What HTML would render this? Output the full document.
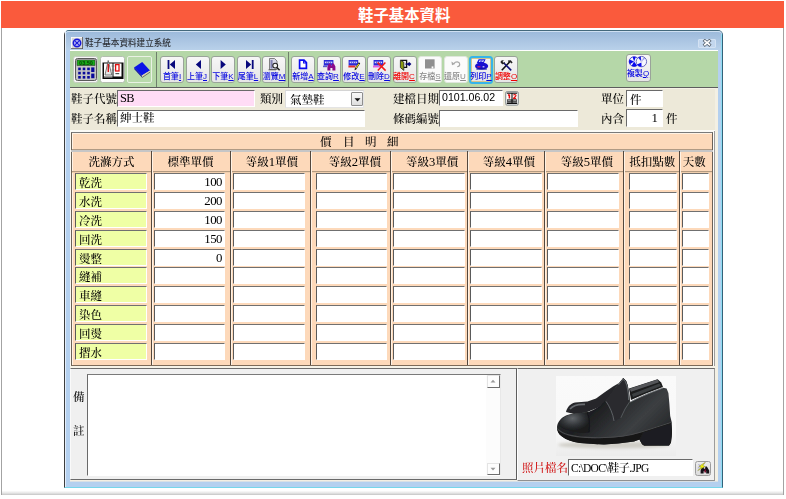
<!DOCTYPE html>
<html lang="zh-Hant"><head><meta charset="utf-8"><title>鞋子基本資料</title>
<style>
html,body{margin:0;padding:0}
body{width:786px;height:499px;position:relative;overflow:hidden;background:#fff;font-family:"Liberation Serif","Noto Serif CJK SC",serif;font-size:11.5px;font-weight:500;color:#000;line-height:1}
div,span{box-sizing:border-box}
.a{position:absolute}
.lab,.inp,.cell,.hd,.ttl,.t{will-change:transform}
.hdr{left:1px;top:1px;width:783px;height:27px;background:#fa5a3c}
.hdr span{position:absolute;left:357px;top:7px;font:bold 15.4px/15px "Liberation Sans","Noto Sans CJK TC",sans-serif;color:#fff;white-space:nowrap}
.win{left:64px;top:30px;width:659px;height:458px;background:#b4d0ef;border-radius:5px 5px 0 0;border:1px solid #33627a;border-top-color:#44697c;border-left-color:#3d3d3d;border-bottom-color:#76d6ea}
.tbar{left:65px;top:31px;width:657px;height:19px;border-radius:4px 4px 0 0;background:linear-gradient(#9dbadb,#b9d1ea);border-top:1px solid #cfe0f2}
.ttl{left:85px;top:38px;font-family:"Liberation Sans","Noto Sans CJK TC",sans-serif;font-size:8.6px;font-weight:500;line-height:10px;color:#30343a;white-space:nowrap}
.lab{white-space:nowrap;font-size:11.5px;line-height:12px;height:12px}
.inp{background:#fff;border:1px solid #6a6a6a;border-right-color:#fff;border-bottom-color:#fff;white-space:nowrap;overflow:hidden;font-size:11.5px;line-height:14px;padding-left:2px}
.cell{background:#fff;border-top:1px solid #707070;border-left:1px solid #5a5a5a;border-right:1px solid #fff;border-bottom:1px solid #fff;height:17px;white-space:nowrap;overflow:hidden;font-size:11.5px;line-height:18px}
.cell.y{background:#efffa5;padding-left:3px}
.cell.n{text-align:right;padding-right:2px;font-size:12.8px;letter-spacing:-0.5px;line-height:17px}
.btn{top:56px;width:24px;height:27px;border:1px solid #9aa39a;border-radius:3px;background:linear-gradient(#f7f7f7,#e6e6e6)}
.btn.dis{border-color:#dfe6dc;background:#fbfbfb}
.btn .t{position:absolute;left:-6.5px;width:34px;top:15px;text-align:center;font-family:"Liberation Sans","Noto Sans CJK TC",sans-serif;font-size:8px;font-weight:500;line-height:9px;color:#0404e0;white-space:nowrap}
.btn.red .t{color:#f00000}
.btn.dis .t{color:#8a8a8a}
.btn svg{position:absolute;left:0;top:0}
.vsep{top:52px;width:1px;height:35px;background:#6f7f6c}
.hd{white-space:nowrap;font-size:11.5px;line-height:12px;text-align:center}
</style></head>
<body>
<div class="a hdr"><span>鞋子基本資料</span></div>
<div class="a" style="left:1px;top:28px;width:1px;height:467px;background:#a3a3a3;"></div>
<div class="a" style="left:783px;top:28px;width:1px;height:467px;background:#a3a3a3;"></div>
<div class="a" style="left:2px;top:491px;width:781px;height:4px;background:linear-gradient(#fbfbfb,#eeeeee,#dcdcdc,#c4c4c4);"></div>
<div class="a win"></div>
<div class="a tbar"></div>
<div class="a" style="left:65px;top:31px;width:1px;height:456px;background:#e4eefa;"></div>
<div class="a" style="left:721px;top:34px;width:1px;height:453px;background:#8fdcf2;"></div>
<svg class="a" style="left:71px;top:37px" width="12" height="12" viewBox="0 0 12 12"><rect x="0" y="0" width="12" height="12" fill="#d8d8d8"/><path d="M0 12V0H12" fill="none" stroke="#fff" stroke-width="1.6"/><path d="M12 0V12H0" fill="none" stroke="#555" stroke-width="1.6"/><circle cx="6" cy="6" r="3.6" fill="#e8e8ff" stroke="#1a1ad8" stroke-width="1.7"/><path d="M4.2 4.2L7.8 7.8M7.8 4.2L4.2 7.8" stroke="#1a1ad8" stroke-width="1.3"/></svg>
<div class="a ttl">鞋子基本資料建立系統</div>
<div class="a" style="left:698px;top:39px;width:18px;height:9px;background:#c3d7ee;border:1px solid #d3e2f3;border-radius:1px"></div>
<svg class="a" style="left:702px;top:39px" width="10" height="8" viewBox="0 0 10 8"><path d="M2.9 1.9L7.3 5.7M7.3 1.9L2.9 5.7" stroke="#566270" stroke-width="3.2" stroke-linecap="square"/><path d="M2.9 1.9L7.3 5.7M7.3 1.9L2.9 5.7" stroke="#fff" stroke-width="1.7" stroke-linecap="square"/></svg>
<div class="a" style="left:70px;top:50px;width:648px;height:1px;background:#fff;"></div>
<div class="a" style="left:70px;top:51px;width:648px;height:36px;background:#b5d7a8;"></div>
<div class="a" style="left:70px;top:87px;width:648px;height:1px;background:#5d5d5d;"></div>
<div class="a" style="left:70px;top:88px;width:647px;height:393px;background:#ede9d9;"></div>
<div class="a" style="left:70px;top:88px;width:647px;height:1px;background:#f5f2e6;"></div>
<div class="a btn" style="left:73px;width:25px;border-color:#c4ccc0;border-radius:2.5px;background:#f6f6f6"></div>
<div class="a btn" style="left:100px;width:25px;border-color:#b4beb0;border-radius:2.5px;background:#fdfdfd"></div>
<div class="a btn" style="left:127px;width:25px;border-color:#e9f2e4;border-radius:2px;background:#b9daac"></div>
<svg class="a" style="left:75px;top:58px" width="22" height="23" viewBox="0 0 22 23"><rect x="0.5" y="0.5" width="21" height="22" rx="2" fill="#c4c4c4" stroke="#5a5a5a"/><rect x="2" y="2" width="18" height="5.5" fill="#18b018" stroke="#333" stroke-width="0.6"/><text x="11" y="6.8" font-size="5.5" font-weight="bold" text-anchor="middle" fill="#064006" font-family="Liberation Sans,sans-serif">03.50</text><rect x="3.2" y="9.6" width="2.6" height="2.6" fill="#0a0a9a"/><rect x="7.7" y="9.6" width="2.6" height="2.6" fill="#0a0a9a"/><rect x="12.2" y="9.6" width="2.6" height="2.6" fill="#0a0a9a"/><rect x="3.2" y="13.8" width="2.6" height="2.6" fill="#0a0a9a"/><rect x="7.7" y="13.8" width="2.6" height="2.6" fill="#0a0a9a"/><rect x="12.2" y="13.8" width="2.6" height="2.6" fill="#0a0a9a"/><rect x="3.2" y="18" width="2.6" height="2.6" fill="#0a0a9a"/><rect x="7.7" y="18" width="2.6" height="2.6" fill="#0a0a9a"/><rect x="12.2" y="18" width="2.6" height="2.6" fill="#0a0a9a"/><rect x="16.2" y="9.4" width="3.2" height="4.6" fill="#0a0a9a"/><rect x="16.2" y="15.6" width="3.2" height="4.6" fill="#0a0a9a"/></svg>
<svg class="a" style="left:102px;top:58px" width="22" height="23" viewBox="0 0 22 23"><path d="M0.5 4.5H21.5V21H0.5Z" fill="#0a0a0a"/><path d="M2 5.5H10.5V18.5H2Z" fill="#fff"/><path d="M11.5 5.5H19.5V18.5H11.5Z" fill="#fff"/><path d="M2 18.5L10.5 18.5L10.5 19.5L2 19.5Z" fill="#bbb"/><path d="M3 17L6.2 2.5L9.8 17Z" fill="#e8e8e8" stroke="#444" stroke-width="0.7"/><path d="M6.3 6V14" stroke="#d01818" stroke-width="1.4"/><rect x="13.6" y="6.6" width="3.4" height="6.4" fill="none" stroke="#e01010" stroke-width="1.3"/><rect x="13.4" y="15" width="3.8" height="1.2" fill="#555"/><path d="M9.6 8H12.4M9.6 12H12.4" stroke="#666" stroke-width="0.8"/></svg>
<svg class="a" style="left:129px;top:58px" width="22" height="23" viewBox="0 0 22 23"><path d="M5 9.6L13.2 4L21 12.4L12.8 17.6Z" fill="#0a14e6"/><path d="M5 9.6L5.6 11.6L13 19.6L12.8 17.6Z" fill="#0a0aa0"/><path d="M12.8 17.6L21 12.4L21 14.2L13 19.6Z" fill="#d9d2b4"/><path d="M13 19.6L21 14.2" stroke="#333" stroke-width="0.6"/></svg>
<div class="a vsep" style="left:156px"></div>
<div class="a vsep" style="left:288px"></div>
<div class="a btn " style="left:160.4px;width:24px"><svg width="22" height="16" viewBox="0 0 22 16"><rect x="6.6" y="3" width="1.8" height="9" fill="#08087c"/><path d="M14 3V12L8.8 7.5Z" fill="#08087c"/></svg><span class="t">首筆<u>I</u></span></div>
<div class="a btn " style="left:185.8px;width:24px"><svg width="22" height="16" viewBox="0 0 22 16"><path d="M14 3V12L8.8 7.5Z" fill="#08087c"/></svg><span class="t">上筆<u>J</u></span></div>
<div class="a btn " style="left:211.2px;width:24px"><svg width="22" height="16" viewBox="0 0 22 16"><path d="M8.6 3V12L13.8 7.5Z" fill="#08087c"/></svg><span class="t">下筆<u>K</u></span></div>
<div class="a btn " style="left:236.6px;width:24px"><svg width="22" height="16" viewBox="0 0 22 16"><path d="M8 3V12L13.2 7.5Z" fill="#08087c"/><rect x="13.8" y="3" width="1.8" height="9" fill="#08087c"/></svg><span class="t">尾筆<u>L</u></span></div>
<div class="a btn " style="left:262px;width:24px"><svg width="22" height="16" viewBox="0 0 22 16"><path d="M6.5 1.5H11.5L14 4V12.5H6.5Z" fill="#d6d6e6" stroke="#666" stroke-width="0.8"/><path d="M7.5 3H9.6V11.5H7.5Z" fill="#8080b0"/><circle cx="12.2" cy="8.6" r="2.4" fill="#f4f4f4" stroke="#222" stroke-width="1.1"/><path d="M14 10.6L16.6 13.2" stroke="#222" stroke-width="1.5"/><path d="M5.5 12.8H13" stroke="#444" stroke-width="0.8"/></svg><span class="t">瀏覽<u>M</u></span></div>
<div class="a btn " style="left:291.2px;width:24px"><svg width="22" height="16" viewBox="0 0 22 16"><path d="M7.6 3.2H12L14.4 5.6V11.4H7.6Z" fill="#fff" stroke="#0a0af0" stroke-width="1.7"/><path d="M11.6 3.2V6H14.4" fill="none" stroke="#0a0af0" stroke-width="1.1"/></svg><span class="t">新增<u>A</u></span></div>
<div class="a btn " style="left:316.6px;width:24px"><svg width="22" height="16" viewBox="0 0 22 16"><rect x="5.8" y="3" width="9.6" height="5.6" fill="#2a2ad8"/><rect x="6.9" y="4.6" width="7.4" height="1.6" fill="#d8d8f4"/><path d="M8.8 4.6V6.2M10.7 4.6V6.2M12.6 4.6V6.2" stroke="#2a2ad8" stroke-width="0.7"/><rect x="5" y="8.6" width="4" height="1.6" fill="#5a5ad0"/><path d="M9.4 13.4V9.6L11 6.6H12.6L13 8.6H13.8L14.2 6.6H15.8L17.4 9.6V13.4H14.4V11H12.4V13.4Z" fill="#8a0a8a"/></svg><span class="t">查詢<u>R</u></span></div>
<div class="a btn " style="left:342px;width:24px"><svg width="22" height="16" viewBox="0 0 22 16"><rect x="5.6" y="3" width="9.6" height="5.6" fill="#2a2ad8"/><rect x="6.7" y="4.6" width="7.4" height="1.6" fill="#d8d8f4"/><path d="M8.6 4.6V6.2M10.5 4.6V6.2M12.4 4.6V6.2" stroke="#2a2ad8" stroke-width="0.7"/><rect x="5.4" y="8.6" width="7" height="1.9" fill="#e03030"/><path d="M15.8 5.2L17.2 6.2L13.2 12.4L11.6 13.2L11.8 11.4Z" fill="#111"/><path d="M15.4 6.6L16.2 7.2L13.2 11.6L12.4 11Z" fill="#f4e020"/></svg><span class="t">修改<u>E</u></span></div>
<div class="a btn " style="left:367.4px;width:24px"><svg width="22" height="16" viewBox="0 0 22 16"><rect x="5.6" y="3" width="9.6" height="5.6" fill="#2a2ad8"/><rect x="6.7" y="4.6" width="7.4" height="1.6" fill="#d8d8f4"/><path d="M8.6 4.6V6.2M10.5 4.6V6.2M12.4 4.6V6.2" stroke="#2a2ad8" stroke-width="0.7"/><rect x="5" y="8.6" width="7.6" height="1.9" fill="#e060e0"/><path d="M9.6 5.6L17.6 13.6M17.4 5.4L9.8 13.4" stroke="#f01818" stroke-width="1.5"/></svg><span class="t">刪除<u>D</u></span></div>
<div class="a btn red" style="left:392.8px;width:24px"><svg width="22" height="16" viewBox="0 0 22 16"><path d="M6.6 3.4H12.6V10.4H9.8" fill="none" stroke="#111" stroke-width="1.3"/><path d="M6.4 3.2L9.8 5.2V13.4L6.4 10.6Z" fill="#8a9a10" stroke="#222" stroke-width="0.8"/><path d="M13 7.1L15.2 4.9L17.4 7.1L15.2 9.3Z" fill="#08087c"/><path d="M11.4 7.1H14" stroke="#08087c" stroke-width="1.2"/></svg><span class="t">離開<u>C</u></span></div>
<div class="a btn dis" style="left:418.2px;width:24px"><svg width="22" height="16" viewBox="0 0 22 16"><rect x="6" y="2.3" width="9.6" height="9.2" fill="#8f8f8f"/><rect x="12.6" y="9.4" width="1.8" height="2.1" fill="#fbfbfb"/></svg><span class="t">存檔<u>S</u></span></div>
<div class="a btn dis" style="left:443.6px;width:24px"><svg width="22" height="16" viewBox="0 0 22 16"><path d="M9 6.6C10.4 4.2 14.4 4.3 14.7 7C14.8 8.6 13.6 9.7 12.2 9.8" fill="none" stroke="#a6a6a6" stroke-width="1.15"/><path d="M6.4 4.6L7 8.3L10.1 6.9Z" fill="#a6a6a6"/></svg><span class="t">還原<u>U</u></span></div>
<div class="a" style="left:468.6px;top:55.5px;width:24.6px;height:28.6px;border:2px solid #36b4ea;border-radius:3.5px;background:#d6c38c"><div class="a" style="left:1px;top:1px;right:1px;bottom:1px;background:linear-gradient(#f6f6f6,#e6e6e6)"></div><div class="a btn" style="left:-1.6px;top:-1.5px;width:24px;height:27px;border-color:transparent;background:none"><svg width="22" height="16" viewBox="0 0 22 16"><path d="M8.6 2.2H15.6L13.8 6H6.8Z" fill="#1414d8"/><path d="M9.6 3.2H14L13.2 5H8.8Z" fill="#e8e8ff"/><path d="M10.4 3.6H12.6M10 4.6H12.2" stroke="#1414d8" stroke-width="0.6"/><ellipse cx="11.6" cy="9" rx="6.6" ry="3.6" fill="#1a10d0"/><path d="M7.4 9.8H10.4" stroke="#e02060" stroke-width="1.1"/><path d="M12.6 9.8H14.4" stroke="#e8e8ff" stroke-width="1.1"/><path d="M6.4 11.4H16.8V12.6H6.4Z" fill="#1010a0"/></svg><span class="t">列印<u>P</u></span></div></div>
<div class="a btn red" style="left:494.4px;width:24px"><svg width="22" height="16" viewBox="0 0 22 16"><path d="M6.8 13.2L14.6 5" stroke="#111" stroke-width="1.6"/><path d="M12.8 3.4L15.8 3.2L17.6 5.4L16.6 6.4L15.2 5.2L14.2 6.2Z" fill="#222"/><path d="M16.2 13.4L8.6 5.8" stroke="#10107a" stroke-width="1.6"/><path d="M5.6 5.6C5.4 3.8 7.4 2.8 8.8 3.6L7.6 4.8L8.4 5.8L9.8 5C10.2 6.6 8.6 7.6 7.2 7.2Z" fill="#222"/></svg><span class="t">調整<u>O</u></span></div>
<div class="a btn" style="left:626.4px;top:54px;width:24.6px;height:27.6px"><svg width="22" height="16" viewBox="0 0 22 16"><circle cx="7.1" cy="6.6" r="4.9" fill="#f4f4ff" stroke="#3c3cc8" stroke-width="0.9"/><circle cx="14.4" cy="6.6" r="5.2" fill="#f6f6ff" stroke="#5a5ab8" stroke-width="0.9"/><path d="M7.1 6.6L2.5 4.4A4.9 4.9 0 0 0 2.9 9.2Z" fill="#0808ee"/><path d="M7.1 6.6L4.6 10.8A4.9 4.9 0 0 0 10 10.6Z" fill="#0808ee"/><path d="M7.1 6.6L5.6 2A4.9 4.9 0 0 1 8.8 2Z" fill="#0808ee"/><path d="M14.4 6.6L11 2.6A5.2 5.2 0 0 1 13.8 1.4Z" fill="#2020e0"/><path d="M14.4 7.4L10 9.4A5.2 5.2 0 0 0 14.6 11.8Z" fill="#0808ee"/><path d="M14.6 6.4L16.4 2.2L18.2 3.6Z" fill="#a0a0f0"/><circle cx="14.4" cy="6.6" r="1.1" fill="#c8c8e8"/></svg><span class="t" style="top:14.2px">複製<u>Q</u></span></div>
<div class="a lab" style="left:71px;top:93px;">鞋子代號</div>
<div class="a inp" style="left:117px;top:90px;width:138px;height:17px;background:#ffdcf6;font-size:12.4px;letter-spacing:-0.6px;">SB</div>
<div class="a lab" style="left:260px;top:93px;">類別</div>
<div class="a inp" style="left:285px;top:90px;width:79px;height:18px;padding-left:4px;line-height:19px;border-color:#d4d4d4 #e4e4e4 #e4e4e4 #dcdcdc;">氣墊鞋</div>
<div class="a" style="left:351px;top:92px;width:12px;height:14.4px;background:linear-gradient(#fafafa,#dedede);border:1px solid #8e8e8e;border-radius:1px"></div>
<svg class="a" style="left:353.6px;top:97.6px" width="7" height="4" viewBox="0 0 7 4"><path d="M0.5 0.3H6.5L3.5 3.6Z" fill="#111"/></svg>
<div class="a lab" style="left:393px;top:93px;">建檔日期</div>
<div class="a inp" style="left:439px;top:90px;width:64px;height:16px;font-family:'Liberation Sans','Noto Sans CJK TC',sans-serif;font-size:10.6px;line-height:13px;">0101.06.02</div>
<svg class="a" style="left:505px;top:91px" width="14" height="15" viewBox="0 0 14 15"><rect x="0.6" y="0.6" width="12.8" height="13.6" rx="1.6" fill="#e6e6e6" stroke="#8c9494" stroke-width="1"/><rect x="1.8" y="2" width="10.4" height="10.6" fill="#fff"/><path d="M1.8 2.2H12.2" stroke="#111" stroke-width="1.1"/><path d="M1.8 12.4H12.2" stroke="#111" stroke-width="1.2"/><rect x="2" y="8.2" width="10" height="3.6" fill="#555"/><path d="M7 2V12.4" stroke="#111" stroke-width="1.1"/><path d="M4.4 3.4V7.6M3.2 4.6L4.4 3.4" stroke="#e01010" stroke-width="1.5" fill="none"/><path d="M8.6 4.4C8.8 3.2 11 3.2 11 4.5C11 5.8 8.8 6.2 8.6 7.4H11.2" stroke="#e01010" stroke-width="1.2" fill="none"/><path d="M3 9.4H5.6M8.4 9.4H11" stroke="#aaa" stroke-width="0.8"/></svg>
<div class="a lab" style="left:600.6px;top:93px;">單位</div>
<div class="a inp" style="left:626px;top:90px;width:37px;height:17px;padding-left:3px;line-height:19px;">件</div>
<div class="a lab" style="left:71px;top:112.5px;">鞋子名稱</div>
<div class="a inp" style="left:117px;top:110px;width:248px;height:17px;line-height:15px;">紳士鞋</div>
<div class="a lab" style="left:393px;top:112.5px;">條碼編號</div>
<div class="a inp" style="left:439px;top:110px;width:139px;height:17px;"></div>
<div class="a lab" style="left:600.6px;top:112.5px;">內含</div>
<div class="a inp" style="left:626px;top:109px;width:37px;height:18px;text-align:right;padding-right:4px;line-height:16px;font-size:12.8px;">1</div>
<div class="a lab" style="left:665.6px;top:112.5px;">件</div>
<div class="a" style="left:70px;top:130px;width:646px;height:2px;background:#fbfaf6;"></div>
<div class="a" style="left:70px;top:132px;width:1px;height:234px;background:#faf8f2;"></div>
<div class="a" style="left:71px;top:132px;width:642px;height:234px;background:#fdd9ba;border:1px solid #6b6258;border-top-color:#7a7a7a;border-bottom-color:#7d6a58;"></div>
<div class="a" style="left:72px;top:133px;width:640px;height:1px;background:#fff2e4;"></div>
<div class="a" style="left:72px;top:133px;width:1px;height:232px;background:#fff2e4;"></div>
<div class="a" style="left:72px;top:149px;width:640px;height:1px;background:#b09a84;"></div>
<div class="a" style="left:71px;top:150px;width:642px;height:2px;background:#c6c6c6;"></div>
<div class="a" style="left:72px;top:171px;width:640px;height:1px;background:#b39a80;"></div>
<div class="a" style="left:72px;top:172px;width:640px;height:1px;background:#f1cfae;"></div>
<div class="a lab" style="left:320.2px;top:135.6px;">價</div>
<div class="a lab" style="left:342.6px;top:135.6px;">目</div>
<div class="a lab" style="left:365px;top:135.6px;">明</div>
<div class="a lab" style="left:387.4px;top:135.6px;">細</div>
<div class="a" style="left:151px;top:151px;width:1px;height:214px;background:#54483e;"></div>
<div class="a" style="left:152px;top:152px;width:1px;height:213px;background:#fff2e4;"></div>
<div class="a" style="left:230px;top:151px;width:1px;height:214px;background:#54483e;"></div>
<div class="a" style="left:231px;top:152px;width:1px;height:213px;background:#fff2e4;"></div>
<div class="a" style="left:310px;top:151px;width:1px;height:214px;background:#54483e;"></div>
<div class="a" style="left:311px;top:152px;width:1px;height:213px;background:#fff2e4;"></div>
<div class="a" style="left:390px;top:151px;width:1px;height:214px;background:#54483e;"></div>
<div class="a" style="left:391px;top:152px;width:1px;height:213px;background:#fff2e4;"></div>
<div class="a" style="left:467px;top:151px;width:1px;height:214px;background:#54483e;"></div>
<div class="a" style="left:468px;top:152px;width:1px;height:213px;background:#fff2e4;"></div>
<div class="a" style="left:544px;top:151px;width:1px;height:214px;background:#54483e;"></div>
<div class="a" style="left:545px;top:152px;width:1px;height:213px;background:#fff2e4;"></div>
<div class="a" style="left:623px;top:151px;width:1px;height:214px;background:#54483e;"></div>
<div class="a" style="left:624px;top:152px;width:1px;height:213px;background:#fff2e4;"></div>
<div class="a" style="left:679px;top:151px;width:1px;height:214px;background:#54483e;"></div>
<div class="a" style="left:680px;top:152px;width:1px;height:213px;background:#fff2e4;"></div>
<div class="a hd" style="left:78.5px;top:155.5px;width:65px">洗滌方式</div>
<div class="a hd" style="left:158px;top:155.5px;width:65px">標準單價</div>
<div class="a hd" style="left:237px;top:155.5px;width:69.7px">等級<span style="font-size:12.6px;line-height:12px;font-weight:400">1</span>單價</div>
<div class="a hd" style="left:319.8px;top:155.5px;width:69.7px">等級<span style="font-size:12.6px;line-height:12px;font-weight:400">2</span>單價</div>
<div class="a hd" style="left:397px;top:155.5px;width:70.4px">等級<span style="font-size:12.6px;line-height:12px;font-weight:400">3</span>單價</div>
<div class="a hd" style="left:473.5px;top:155.5px;width:69.9px">等級<span style="font-size:12.6px;line-height:12px;font-weight:400">4</span>單價</div>
<div class="a hd" style="left:551.5px;top:155.5px;width:69.9px">等級<span style="font-size:12.6px;line-height:12px;font-weight:400">5</span>單價</div>
<div class="a hd" style="left:620.1px;top:155.5px;width:64.5px">抵扣點數</div>
<div class="a hd" style="left:673.3px;top:155.5px;width:42.4px">天數</div>
<div class="a cell y" style="left:75px;top:173px;width:72px">乾洗</div>
<div class="a cell n" style="left:154px;top:173px;width:71px">100</div>
<div class="a cell" style="left:233px;top:173px;width:72px"></div>
<div class="a cell" style="left:316px;top:173px;width:71px"></div>
<div class="a cell" style="left:393px;top:173px;width:72px"></div>
<div class="a cell" style="left:470px;top:173px;width:72px"></div>
<div class="a cell" style="left:547px;top:173px;width:72px"></div>
<div class="a cell" style="left:629px;top:173px;width:48px"></div>
<div class="a cell" style="left:682px;top:173px;width:27px"></div>
<div class="a cell y" style="left:75px;top:192px;width:72px">水洗</div>
<div class="a cell n" style="left:154px;top:192px;width:71px">200</div>
<div class="a cell" style="left:233px;top:192px;width:72px"></div>
<div class="a cell" style="left:316px;top:192px;width:71px"></div>
<div class="a cell" style="left:393px;top:192px;width:72px"></div>
<div class="a cell" style="left:470px;top:192px;width:72px"></div>
<div class="a cell" style="left:547px;top:192px;width:72px"></div>
<div class="a cell" style="left:629px;top:192px;width:48px"></div>
<div class="a cell" style="left:682px;top:192px;width:27px"></div>
<div class="a cell y" style="left:75px;top:211px;width:72px">冷洗</div>
<div class="a cell n" style="left:154px;top:211px;width:71px">100</div>
<div class="a cell" style="left:233px;top:211px;width:72px"></div>
<div class="a cell" style="left:316px;top:211px;width:71px"></div>
<div class="a cell" style="left:393px;top:211px;width:72px"></div>
<div class="a cell" style="left:470px;top:211px;width:72px"></div>
<div class="a cell" style="left:547px;top:211px;width:72px"></div>
<div class="a cell" style="left:629px;top:211px;width:48px"></div>
<div class="a cell" style="left:682px;top:211px;width:27px"></div>
<div class="a cell y" style="left:75px;top:230px;width:72px">回洗</div>
<div class="a cell n" style="left:154px;top:230px;width:71px">150</div>
<div class="a cell" style="left:233px;top:230px;width:72px"></div>
<div class="a cell" style="left:316px;top:230px;width:71px"></div>
<div class="a cell" style="left:393px;top:230px;width:72px"></div>
<div class="a cell" style="left:470px;top:230px;width:72px"></div>
<div class="a cell" style="left:547px;top:230px;width:72px"></div>
<div class="a cell" style="left:629px;top:230px;width:48px"></div>
<div class="a cell" style="left:682px;top:230px;width:27px"></div>
<div class="a cell y" style="left:75px;top:249px;width:72px">燙整</div>
<div class="a cell n" style="left:154px;top:249px;width:71px">0</div>
<div class="a cell" style="left:233px;top:249px;width:72px"></div>
<div class="a cell" style="left:316px;top:249px;width:71px"></div>
<div class="a cell" style="left:393px;top:249px;width:72px"></div>
<div class="a cell" style="left:470px;top:249px;width:72px"></div>
<div class="a cell" style="left:547px;top:249px;width:72px"></div>
<div class="a cell" style="left:629px;top:249px;width:48px"></div>
<div class="a cell" style="left:682px;top:249px;width:27px"></div>
<div class="a cell y" style="left:75px;top:267px;width:72px">縫補</div>
<div class="a cell n" style="left:154px;top:267px;width:71px"></div>
<div class="a cell" style="left:233px;top:267px;width:72px"></div>
<div class="a cell" style="left:316px;top:267px;width:71px"></div>
<div class="a cell" style="left:393px;top:267px;width:72px"></div>
<div class="a cell" style="left:470px;top:267px;width:72px"></div>
<div class="a cell" style="left:547px;top:267px;width:72px"></div>
<div class="a cell" style="left:629px;top:267px;width:48px"></div>
<div class="a cell" style="left:682px;top:267px;width:27px"></div>
<div class="a cell y" style="left:75px;top:286px;width:72px">車縫</div>
<div class="a cell n" style="left:154px;top:286px;width:71px"></div>
<div class="a cell" style="left:233px;top:286px;width:72px"></div>
<div class="a cell" style="left:316px;top:286px;width:71px"></div>
<div class="a cell" style="left:393px;top:286px;width:72px"></div>
<div class="a cell" style="left:470px;top:286px;width:72px"></div>
<div class="a cell" style="left:547px;top:286px;width:72px"></div>
<div class="a cell" style="left:629px;top:286px;width:48px"></div>
<div class="a cell" style="left:682px;top:286px;width:27px"></div>
<div class="a cell y" style="left:75px;top:305px;width:72px">染色</div>
<div class="a cell n" style="left:154px;top:305px;width:71px"></div>
<div class="a cell" style="left:233px;top:305px;width:72px"></div>
<div class="a cell" style="left:316px;top:305px;width:71px"></div>
<div class="a cell" style="left:393px;top:305px;width:72px"></div>
<div class="a cell" style="left:470px;top:305px;width:72px"></div>
<div class="a cell" style="left:547px;top:305px;width:72px"></div>
<div class="a cell" style="left:629px;top:305px;width:48px"></div>
<div class="a cell" style="left:682px;top:305px;width:27px"></div>
<div class="a cell y" style="left:75px;top:324px;width:72px">回燙</div>
<div class="a cell n" style="left:154px;top:324px;width:71px"></div>
<div class="a cell" style="left:233px;top:324px;width:72px"></div>
<div class="a cell" style="left:316px;top:324px;width:71px"></div>
<div class="a cell" style="left:393px;top:324px;width:72px"></div>
<div class="a cell" style="left:470px;top:324px;width:72px"></div>
<div class="a cell" style="left:547px;top:324px;width:72px"></div>
<div class="a cell" style="left:629px;top:324px;width:48px"></div>
<div class="a cell" style="left:682px;top:324px;width:27px"></div>
<div class="a cell y" style="left:75px;top:343px;width:72px">摺水</div>
<div class="a cell n" style="left:154px;top:343px;width:71px"></div>
<div class="a cell" style="left:233px;top:343px;width:72px"></div>
<div class="a cell" style="left:316px;top:343px;width:71px"></div>
<div class="a cell" style="left:393px;top:343px;width:72px"></div>
<div class="a cell" style="left:470px;top:343px;width:72px"></div>
<div class="a cell" style="left:547px;top:343px;width:72px"></div>
<div class="a cell" style="left:629px;top:343px;width:48px"></div>
<div class="a cell" style="left:682px;top:343px;width:27px"></div>
<div class="a" style="left:713px;top:132px;width:1px;height:234px;background:#fcfcfa;"></div>
<div class="a" style="left:714px;top:131px;width:1px;height:238px;background:#9c9c9c;"></div>
<div class="a" style="left:70px;top:366px;width:647px;height:2px;background:#f6f3e8;"></div>
<div class="a" style="left:70px;top:368px;width:447px;height:112px;background:#f0f0f0;border-top:1px solid #6c6c6c;border-left:1px solid #fafafa;border-right:1px solid #5e5e5e;border-bottom:1px solid #6a6a6a;"></div>
<div class="a" style="left:70px;top:480px;width:447px;height:1px;background:#f4efe2;"></div>
<div class="a" style="left:517px;top:368px;width:198px;height:113px;background:#f0f0f0;border-top:1px solid #6c6c6c;border-left:1px solid #fff;border-right:1px solid #9c9c9c;border-bottom:1px solid #909090;"></div>
<div class="a" style="left:715px;top:88px;width:3px;height:393px;background:#f3f0e4;"></div>
<div class="a" style="left:70px;top:481px;width:648px;height:1px;background:#d9e0e6;"></div>
<div class="a lab" style="left:72.6px;top:391px;">備</div>
<div class="a lab" style="left:72.6px;top:425px;">註</div>
<div class="a" style="left:87px;top:374px;width:414px;height:102px;background:#fff;border-top:1px solid #7a7a7a;border-left:1px solid #6a6a6a;border-right:1px solid #e8e8e8;border-bottom:1px solid #fff;"></div>
<div class="a" style="left:486px;top:375px;width:14px;height:100px;background:#fcfcfc;"></div>
<div class="a" style="left:487px;top:375px;width:12.5px;height:12.5px;background:#fdfdfd;border:1px solid #e4e4e4;border-right:1.5px solid #6e6e6e;border-bottom:1.5px solid #6e6e6e;"></div>
<svg class="a" style="left:490px;top:379px" width="6" height="4" viewBox="0 0 6 4"><path d="M0.5 3.5L3 0.8L5.5 3.5Z" fill="#9a9a9a"/></svg>
<div class="a" style="left:487px;top:462.5px;width:12.5px;height:12.5px;background:#fdfdfd;border:1px solid #e4e4e4;border-right:1.5px solid #6e6e6e;border-bottom:1.5px solid #6e6e6e;"></div>
<svg class="a" style="left:490px;top:466.5px" width="6" height="4" viewBox="0 0 6 4"><path d="M0.5 0.8L3 3.5L5.5 0.8Z" fill="#9a9a9a"/></svg>
<svg class="a" style="left:556px;top:376px" width="120" height="80" viewBox="0 0 120 80">
<defs><linearGradient id="bg" x1="0" y1="0" x2="0" y2="1"><stop offset="0" stop-color="#fafafa"/><stop offset="0.7" stop-color="#f8f8f8"/><stop offset="1" stop-color="#ececec"/></linearGradient>
<linearGradient id="up" x1="0" y1="0" x2="1" y2="0.6"><stop offset="0" stop-color="#3a3d40"/><stop offset="0.45" stop-color="#1d1e20"/><stop offset="0.8" stop-color="#3c3f42"/><stop offset="1" stop-color="#2a2c2e"/></linearGradient>
<radialGradient id="toe" cx="0.45" cy="0.3" r="0.6"><stop offset="0" stop-color="#62666a"/><stop offset="0.6" stop-color="#303336"/><stop offset="1" stop-color="#1a1b1c"/></radialGradient>
<filter id="bl" x="-5%" y="-5%" width="110%" height="110%"><feGaussianBlur stdDeviation="0.45"/></filter>
<filter id="bl2" x="-10%" y="-50%" width="120%" height="200%"><feGaussianBlur stdDeviation="1.6"/></filter></defs>
<rect width="120" height="80" fill="url(#bg)"/>
<ellipse cx="58" cy="69" rx="56" ry="3.6" fill="#cfcdc6" filter="url(#bl2)"/>
<g filter="url(#bl)">
<path d="M10 36C11 31 14.5 27.4 19 26.4L31.5 25.6L40 22.5L49 16L57 10.6L63 7L49 27L41 32L30 36.5L18 38Z" fill="#26282a"/>
<path d="M14 33C17 29.5 22 28 29 28.4" stroke="#676b6f" stroke-width="1.6" fill="none"/>
<path d="M73 12.6L87 8L101.6 3.2L105.2 6.4L107 11L90 17.5L75 24Z" fill="#1b1c1e"/>
<path d="M73.6 12.8L101.4 3.6L103 6.2L75 15.8Z" fill="#54575a"/>
<path d="M76 18L103.5 7.6L105 10L77 21Z" fill="#3d4043"/>
<path d="M1 51C1.6 46 5 42 10 39.6C13 38.2 16 37.6 19 37.4L30.5 36.2C34.5 35.4 38.5 33.4 42 31C45 29 47 27 49 24.6L56 16L62 8.4L67.2 2L70.2 5L71.8 9.6L73.2 18L74 26C80 23 86 20 92 17.6L107 11.8L110.6 12.6L112.4 17L113.4 28L114.2 40L115.8 46.4L116 56L115 66.4L113 69.4L88 69.6L86 68L83.4 63.4L78 65.6L62 67.6L48 68.6L24 67C16 66 10 63.6 6 60.6C2.6 58 1 55 1 51Z" fill="url(#up)"/>
<path d="M3.6 45.5C7 41 12 38.4 19 37.4L30.5 36.2C32.6 40.5 33.6 47 33 56.6C22 57.5 10 55 3 50Z" fill="url(#toe)"/>
<path d="M31 36.4C33.4 41 34 48 33.2 56.4" stroke="#15161a" stroke-width="1" fill="none"/>
<path d="M49 24.6L56 16L62 8.4L67.2 2L70.2 5L71.8 9.6L73.2 18L73.6 25L68.6 33L64.6 42L57.6 45.4C57 39 53.6 31 49 24.6Z" fill="#2a2c2f"/>
<path d="M62.4 9L67 3.2L69.4 5.6L71 10L72.4 18L72.6 24" stroke="#6a6e72" stroke-width="0.9" fill="none"/>
<path d="M50 25.4C54 31 57 38 58 45" stroke="#63676b" stroke-width="0.9" fill="none"/>
<path d="M64.8 41.8L69 33L73.8 25.6" stroke="#5d6165" stroke-width="0.8" fill="none"/>
<path d="M74.4 26C82 22 92 17.4 107 12" stroke="#7b7f83" stroke-width="0.9" fill="none"/>
<path d="M1 51.4C2 55.4 5.4 58 12 59.8C22 62.2 40 62.8 58 61.4C70 60.4 80 58 86 55.4L114.6 46L116 56L115 66.4L113 69.4L88 69.6L86 68L83.4 63.4L78 65.6L62 67.6L48 68.6L24 67C16 66 10 63.6 6 60.6C2.6 58 1 55 1 51.4Z" fill="#161616"/>
<path d="M2 53.4C6 57.6 14 60.4 30 61.4C48 62.4 70 61 86 55.8L114.8 46.6" stroke="#48494b" stroke-width="1.1" fill="none"/>
<path d="M83.6 63.2L86.4 68.4L88.4 69.4L113 69.2L114.8 66.2L115.8 56L115 47.4L100 52L87 56.4Z" fill="#1f1f20"/>
</g>
</svg>
<div class="a lab" style="left:522px;top:462px;color:#d01414;">照片檔名</div>
<div class="a inp" style="left:568px;top:459px;width:125px;height:17px;line-height:16px;padding-left:2px;letter-spacing:-0.7px;">C:\DOC\鞋子.JPG</div>
<div class="a" style="left:695px;top:461px;width:16px;height:14.6px;background:linear-gradient(#ececec,#dcdcdc);border:1px solid #9c9c9c;border-radius:2.5px"></div>
<svg class="a" style="left:696px;top:462px" width="14" height="13" viewBox="0 0 14 13"><path d="M4.6 11.6V8.4L6.2 4.6H7.6L7.9 6.8H9.1L9.4 4.6H10.8L13.2 8.4V11.6H10.2V9.2H7.6V11.6Z" fill="#16121a"/><path d="M8.4 7.4H10V10.4H8.4Z" fill="#7a1030"/><path d="M9.4 0.2L2.8 4.4L5.4 5L1.8 8.6L9.2 4.6L6.8 3.6Z" fill="#eef010" stroke="#6a6a20" stroke-width="0.4"/><path d="M2.4 2.6L4.4 3.6M1.8 6L3.4 5.6" stroke="#7070c0" stroke-width="0.6"/></svg>
</body></html>
